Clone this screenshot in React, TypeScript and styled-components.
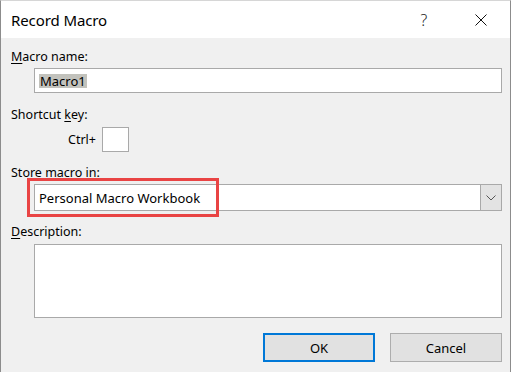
import styled, { createGlobalStyle } from 'styled-components';

const GlobalStyle = createGlobalStyle`
  html, body {
    margin: 0;
    padding: 0;
    background: #ffffff;
  }
  * {
    box-sizing: border-box;
  }
`;

const colors = {
  face: '#f0f0f0',
  text: '#000000',
  field: '#ffffff',
  fieldBorder: '#a9a9a9',
  button: '#e1e1e1',
  buttonBorder: '#adadad',
  accent: '#0078d7',
  mark: '#e94444',
};

const font = `'Segoe UI', 'Noto Sans', sans-serif`;

const Window = styled.div`
  width: 511px;
  height: 372px;
  display: flex;
  flex-direction: column;
  border-left: 1px solid #8c8c8c;
  border-right: 1px solid #8c8c8c;
  border-top: 1px solid #d6d6d6;
  font-family: ${font};
  color: ${colors.text};
  overflow: hidden;
`;

const TitleBar = styled.div`
  height: 37px;
  flex: none;
  display: flex;
  align-items: center;
  background: #ffffff;
  padding-left: 10px;
`;

const Title = styled.div`
  flex: 1;
  font-size: 15px;
  letter-spacing: -0.1px;
`;

const HelpGlyph = styled.div`
  width: 20px;
  font-size: 16px;
  font-weight: 300;
  text-align: center;
  margin-right: 24px;
  color: #222;
`;

const CloseButton = styled.div`
  width: 46px;
  height: 37px;
  display: flex;
  align-items: center;
  justify-content: center;
  margin-right: 6px;
`;

const Body = styled.div`
  flex: 1;
  background: ${colors.face};
  padding: 11px 8px 0 10px;
  display: flex;
  flex-direction: column;
`;

const Label = styled.div<{ $gap?: number }>`
  font-size: 12.5px;
  line-height: 16px;
  height: 16px;
  margin-top: ${p => p.$gap ?? 0}px;
`;

const Key = styled.span`
  text-decoration: underline;
  text-underline-offset: 2px;
`;

const Indented = styled.div<{ $gap?: number }>`
  margin-left: 23px;
  margin-top: ${p => p.$gap ?? 0}px;
  position: relative;
`;

const TextField = styled.div<{ $height: number }>`
  height: ${p => p.$height}px;
  background: ${colors.field};
  border: 1px solid ${colors.fieldBorder};
  display: flex;
  align-items: center;
  padding-left: 4px;
  font-size: 13px;
`;

const Selected = styled.span`
  background: #c2c2bc;
  padding: 0 1px;
  line-height: 14px;
`;

const ShortcutRow = styled.div`
  display: flex;
  align-items: center;
  gap: 6px;
  margin-left: 57px;
  margin-top: 4px;
  font-size: 12.5px;
`;

const KeyBox = styled.div`
  width: 27px;
  height: 25px;
  background: ${colors.field};
  border: 1px solid ${colors.fieldBorder};
`;

const Select = styled.div`
  height: 27px;
  display: flex;
  background: ${colors.field};
  border: 1px solid ${colors.fieldBorder};
  font-size: 13px;
`;

const SelectValue = styled.div`
  flex: 1;
  display: flex;
  align-items: center;
  padding-left: 4px;
`;

const SelectArrow = styled.div`
  width: 21px;
  background: #e3e3e3;
  border-left: 1px solid ${colors.fieldBorder};
  display: flex;
  align-items: center;
  justify-content: center;
`;

const Highlight = styled.div`
  position: absolute;
  left: -7px;
  top: -6px;
  width: 192px;
  height: 39px;
  border: 3px solid ${colors.mark};
  pointer-events: none;
`;

const ButtonRow = styled.div`
  display: flex;
  justify-content: flex-end;
  gap: 15px;
  margin-top: 15px;
`;

const Button = styled.div<{ $default?: boolean }>`
  width: 112px;
  height: 29px;
  display: flex;
  align-items: center;
  justify-content: center;
  background: ${colors.button};
  border: ${p => (p.$default ? `2px solid ${colors.accent}` : `1px solid ${colors.buttonBorder}`)};
  font-size: 13px;
`;

export default function App() {
  return (
    <>
      <GlobalStyle />
      <Window>
        <TitleBar>
          <Title>Record Macro</Title>
          <HelpGlyph>?</HelpGlyph>
          <CloseButton>
            <svg width="12" height="12" viewBox="0 0 12 12">
              <path d="M0.5 0.5 L11.5 11.5 M11.5 0.5 L0.5 11.5" stroke="#111" strokeWidth="1" />
            </svg>
          </CloseButton>
        </TitleBar>
        <Body>
          <Label>
            <Key>M</Key>acro name:
          </Label>
          <Indented $gap={3}>
            <TextField $height={25}>
              <Selected>Macro1</Selected>
            </TextField>
          </Indented>
          <Label $gap={14}>
            Shortcut <Key>k</Key>ey:
          </Label>
          <ShortcutRow>
            <span>Ctrl+</span>
            <KeyBox />
          </ShortcutRow>
          <Label $gap={13}>Store macro in:</Label>
          <Indented $gap={3}>
            <Select>
              <SelectValue>Personal Macro Workbook</SelectValue>
              <SelectArrow>
                <svg width="10" height="6" viewBox="0 0 10 6">
                  <path d="M0.5 0.5 L5 5 L9.5 0.5" stroke="#555" strokeWidth="1" fill="none" />
                </svg>
              </SelectArrow>
            </Select>
            <Highlight />
          </Indented>
          <Label $gap={13}>
            <Key>D</Key>escription:
          </Label>
          <Indented $gap={4}>
            <TextField $height={74} />
          </Indented>
          <ButtonRow>
            <Button $default>OK</Button>
            <Button>Cancel</Button>
          </ButtonRow>
        </Body>
      </Window>
    </>
  );
}
